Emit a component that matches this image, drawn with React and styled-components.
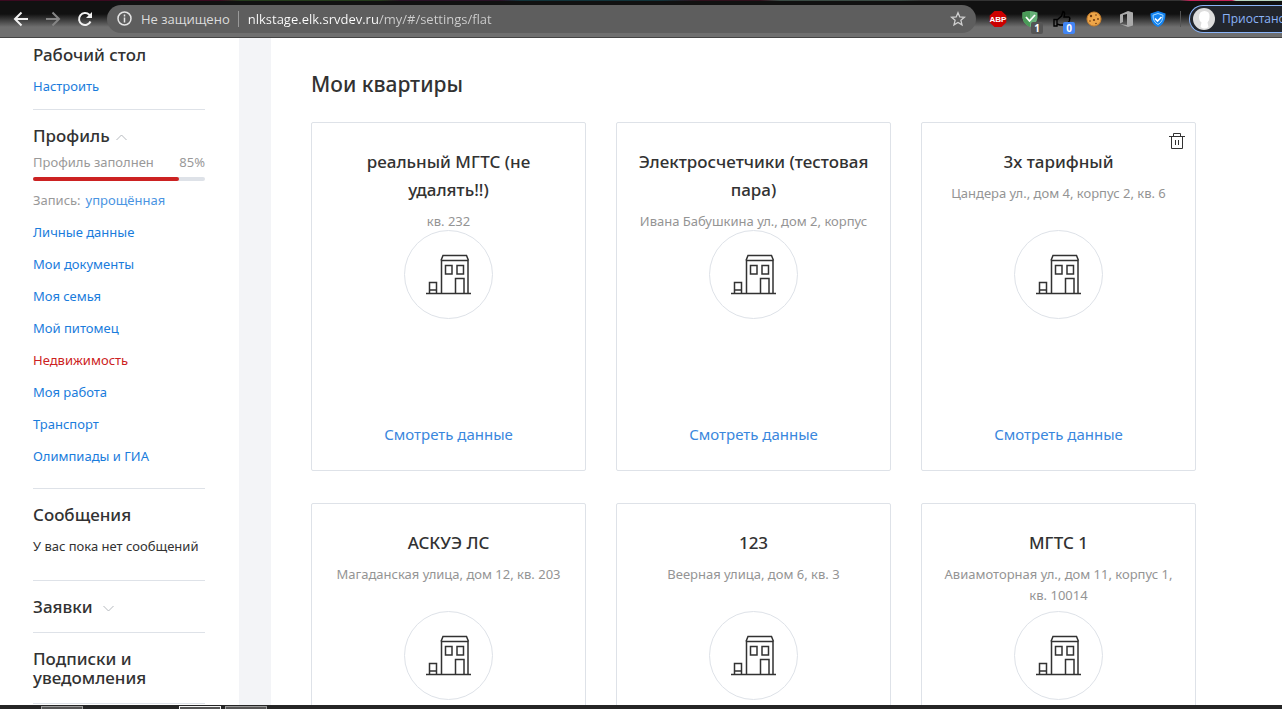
import React from "react";
import styled, { createGlobalStyle } from "styled-components";

const GlobalStyle = createGlobalStyle`
  * {
    box-sizing: border-box;
  }
  body {
    margin: 0;
    background: #fff;
    color: #323232;
    font-family: "Noto Sans", "Open Sans", sans-serif;
    font-size: 13px;
  }
  h1, h2, h3, p, ul {
    margin: 0;
    padding: 0;
  }
  button, input {
    margin: 0;
    padding: 0;
    border: 0;
    background: none;
    font: inherit;
    color: inherit;
  }
  svg {
    display: block;
    flex: none;
  }
`;

const profileLinks = [
  { name: "Личные данные", path: "#/settings/person" },
  { name: "Мои документы", path: "#/settings/docs" },
  { name: "Моя семья", path: "#/settings/family" },
  { name: "Мой питомец", path: "#/settings/pet" },
  { name: "Недвижимость", path: "#/settings/flat", active: true },
  { name: "Моя работа", path: "#/settings/work" },
  { name: "Транспорт", path: "#/settings/transport" },
  { name: "Олимпиады и ГИА", path: "#/settings/olymp" },
];

const flats = [
  { id: 1, title: "реальный МГТС (не удалять!!)", address: "кв. 232" },
  { id: 2, title: "Электросчетчики (тестовая пара)", address: "Ивана Бабушкина ул., дом 2, корпус" },
  { id: 3, title: "3х тарифный", address: "Цандера ул., дом 4, корпус 2, кв. 6", removable: true },
  { id: 4, title: "АСКУЭ ЛС", address: "Магаданская улица, дом 12, кв. 203" },
  { id: 5, title: "123", address: "Веерная улица, дом 6, кв. 3" },
  { id: 6, title: "МГТС 1", address: "Авиамоторная ул., дом 11, корпус 1, кв. 10014" },
];

const profileFilled = 85;

const Window = styled.div`
  display: flex;
  flex-direction: column;
  height: 100vh;
  overflow: hidden;
`;

//
// Панель браузера
//
const Toolbar = styled.header`
  display: flex;
  align-items: center;
  flex: none;
  height: 38px;
  border-bottom: 1px solid #444;
  background:
    linear-gradient(90deg, #3b0a20 0 220px, #243b1c 240px 380px, #2a1226 400px 500px, #12343a 520px 660px, #30101c 700px 760px, #3a4a44 780px 900px, #333 920px 1180px, #c22458 1190px 1232px, #b9d6c0 1236px) top / 100% 1px no-repeat,
    linear-gradient(#111 0, #111 14px, #6f6f6f 27px, #6f6f6f 100%);
  font-family: "Open Sans", "Noto Sans", sans-serif;
  overflow: hidden;
`;

const NavButtons = styled.div`
  display: flex;
  gap: 16px;
  padding: 0 14px 0 13px;
`;

const NavButton = styled.button`
  color: ${(props) => (props.disabled ? "#858585" : "#f1f1f1")};
`;

const AddressBar = styled.div`
  display: flex;
  align-items: center;
  flex: 1;
  height: 28px;
  padding: 0 10px;
  border-radius: 14px;
  background: #5e5e5e;
`;

const Security = styled.label`
  margin-left: 9px;
  padding-right: 8px;
  border-right: 1px solid #999;
  color: #dcdcdc;
  line-height: 16px;
  white-space: nowrap;
`;

const UrlInput = styled.input`
  flex: 1;
  min-width: 0;
  margin-left: 9px;
  background: linear-gradient(90deg, #fff 131px, #cfcfcf 131px);
  background-clip: text;
  color: transparent;
  outline: none;
`;

const Extensions = styled.div`
  display: flex;
  align-items: center;
  gap: 8px;
  padding: 0 10px;
`;

const ExtensionButton = styled.button`
  position: relative;
  padding: 2px;
`;

const Badge = styled.span`
  position: absolute;
  right: -1px;
  bottom: -4px;
  width: 12px;
  height: 12px;
  border-radius: 2px;
  background: ${(props) => props.$color};
  color: #fff;
  font-size: 10px;
  font-weight: 700;
  line-height: 12px;
  text-align: center;
`;

const Account = styled.button`
  display: flex;
  align-items: center;
  flex: none;
  gap: 7px;
  width: 93px;
  height: 28px;
  padding-left: 3px;
  overflow: hidden;
  border: 1px solid #8ab4f8;
  border-right: 0;
  border-radius: 14px 0 0 14px;
  background: #22262d;
  color: #8ab4f8;
  font-size: 12px;
  white-space: nowrap;
`;

const Separator = styled.span`
  width: 1px;
  height: 16px;
  margin-right: 8px;
  background: #555;
`;

//
// Страница
//
const Page = styled.div`
  display: flex;
  flex: 1;
  min-height: 0;
`;

const Sidebar = styled.aside`
  flex: none;
  width: 271px;
  padding: 0 34px 0 33px;
  border-right: 32px solid #f3f4f7;
  overflow: hidden;
`;

const Section = styled.section`
  padding: ${(props) => props.$top || 16}px 0 ${(props) => props.$bottom || 16}px;
  border-bottom: 1px solid #dee2e8;
`;

const SectionTitle = styled.h2`
  display: flex;
  align-items: center;
  gap: ${(props) => props.$gap || 0}px;
  font-size: 17px;
  font-weight: 500;
  line-height: 19px;
  svg {
    margin-top: 4px;
  }
`;

const SideText = styled.p`
  display: flex;
  gap: 5px;
  margin-top: ${(props) => props.$space || 12}px;
  color: ${(props) => (props.$muted ? "#999" : "#323232")};
  line-height: 20px;
  white-space: nowrap;
`;

const SideLink = styled.a`
  color: ${(props) => (props.$active ? "#cc2222" : props.$light ? "#4a94e2" : "#1a7cdc")};
  text-decoration: none;
`;

const ProgressLabel = styled.label`
  display: flex;
  justify-content: space-between;
  margin-top: 7px;
  color: #999;
  line-height: 20px;
`;

const Progress = styled.progress`
  display: block;
  appearance: none;
  width: 100%;
  height: 4px;
  margin-top: 5px;
  border: 0;
  &::-webkit-progress-bar {
    border-radius: 2px;
    background: #dee2e8;
  }
  &::-webkit-progress-value {
    border-radius: 2px;
    background: #cc2222;
  }
`;

const LinkList = styled.ul`
  display: flex;
  flex-direction: column;
  gap: 12px;
  margin-top: 12px;
  line-height: 20px;
  list-style: none;
`;

const Main = styled.main`
  flex: 1;
  padding: 32px 86px 0 40px;
  overflow: hidden;
`;

const PageTitle = styled.h1`
  font-size: 21px;
  font-weight: 500;
  line-height: 28px;
`;

const FlatGrid = styled.div`
  display: grid;
  grid-template-columns: repeat(3, 1fr);
  gap: 32px 30px;
  margin-top: 24px;
`;

const Card = styled.article`
  position: relative;
  display: flex;
  flex-direction: column;
  align-items: center;
  padding: 25px 18px 24px;
  border: 1px solid #dee2e8;
  border-radius: 2px;
  text-align: center;
`;

const CardText = styled.div`
  height: 82px;
  overflow: hidden;
`;

const CardTitle = styled.h3`
  font-size: 17px;
  font-weight: 500;
  line-height: 28px;
`;

const CardAddress = styled.p`
  margin-top: 7px;
  color: #949494;
  line-height: 21px;
`;

const IconCircle = styled.div`
  display: grid;
  place-items: center;
  width: 89px;
  height: 89px;
  border: 1px solid #dee2e8;
  border-radius: 50%;
`;

const CardLink = styled.a`
  margin-top: 103px;
  color: #3a87dd;
  font-size: 15px;
  line-height: 24px;
  text-decoration: none;
`;

const DeleteButton = styled.button`
  position: absolute;
  top: 9px;
  right: 10px;
`;

const Taskbar = styled.footer`
  display: flex;
  align-items: flex-end;
  gap: 4px;
  flex: none;
  height: 4px;
  padding-left: 41px;
  background: #252525;
`;

const TaskButton = styled.button`
  width: 42px;
  height: 3px;
  margin-right: ${(props) => props.$space || 0}px;
  border: 1px solid ${(props) => (props.$active ? "#f1f1f1" : "#999")};
  border-bottom: 0;
  background: #555;
`;

const Arrow = ({ back }) => (
  <svg width="16" height="16" viewBox="0 0 16 16" fill="none" stroke="currentColor" strokeWidth="2">
    <path d={back ? "M15 8H2M8.500 1.500 2 8l6.500 6.500" : "M1 8h13M7.500 1.500 14 8l-6.500 6.500"} />
  </svg>
);

const Reload = () => (
  <svg width="16" height="16" viewBox="0 0 16 16" fill="none" stroke="currentColor" strokeWidth="2">
    <path d="M13.500 10.500A6 6 0 1 1 12.300 3.800L14 5.500" />
    <path d="M15 1v6H9z" fill="currentColor" stroke="none" />
  </svg>
);

const Info = () => (
  <svg width="15" height="15" viewBox="0 0 15 15" fill="none" stroke="#e4e4e4" strokeWidth="1.500">
    <circle cx="7.500" cy="7.500" r="6.500" />
    <path d="M7.500 6.500v5M7.500 3.500v2" />
  </svg>
);

const Star = () => (
  <svg width="16" height="16" viewBox="0 0 16 16" fill="none" stroke="#d0d0d0" strokeWidth="1.300">
    <path d="m8 1.700 1.800 4.200 4.600.400-3.500 3 1.100 4.500L8 11.400l-4 2.400 1.100-4.500-3.500-3 4.600-.400z" />
  </svg>
);

const AbpIcon = () => (
  <svg width="20" height="18" viewBox="0 0 20 18">
    <path d="M6.500 1h7L18.300 5.500v7L13.500 17h-7L1.700 12.500v-7z" fill="#cc0000" />
    <text x="10" y="12" fill="#fff" fontSize="8" fontWeight="700" textAnchor="middle" fontFamily="Liberation Sans, sans-serif">ABP</text>
  </svg>
);

const AdguardIcon = () => (
  <svg width="20" height="18" viewBox="0 0 20 18">
    <path d="M2.500 2.500Q10-.500 17.500 2.500V8q-1 6-7.500 9Q3.500 14 2.500 8z" fill="#67b279" />
    <path d="M10 1v16Q3.500 14 2.500 8V2.500Q6 1 10 1z" fill="#4a9b58" />
    <path d="m6 7 3.500 4L15 5" fill="none" stroke="#fff" strokeWidth="1.800" />
  </svg>
);

const ThumbIcon = () => (
  <svg width="20" height="18" viewBox="0 0 20 18" fill="none" stroke="#000" strokeWidth="1.400">
    <path d="M2 9.500h3V16H2zM5 10l4.500-4L11 1.500q2 .5 1.500 3L12 7h5q1.500 1 .5 2.500.5 1.500-1 2.500 0 2-2 3H8l-3-1" />
  </svg>
);

const CookieIcon = () => (
  <svg width="20" height="18" viewBox="0 0 20 18">
    <circle cx="10" cy="9" r="7" fill="#eda548" stroke="#c9802c" />
    <g fill="#6d3a12">
      <circle cx="7" cy="6" r="1.200" />
      <circle cx="12" cy="5" r=".8" />
      <circle cx="10" cy="10" r="1.100" />
      <circle cx="14" cy="9" r=".9" />
      <circle cx="6" cy="11" r=".8" />
      <circle cx="12" cy="13.500" r=".8" />
    </g>
  </svg>
);

const OfficeIcon = () => (
  <svg width="20" height="18" viewBox="0 0 20 18">
    <path fillRule="evenodd" d="M4 4.500 12 1l5 1.500v13L12 17l-8-3 7 1V4L7 5v7l-3 1.500z" fill="#aaa" />
  </svg>
);

const ShieldIcon = () => (
  <svg width="20" height="18" viewBox="0 0 20 18" fill="none">
    <path d="m10 1 7.500 2.500c0 6-1.500 11-7.500 13.500C4 14.500 2.500 9.500 2.500 3.500z" fill="#1282f0" />
    <path d="m10 3.500 5 1.700c0 4.300-1.500 7.500-5 9.300-3.500-1.800-5-5-5-9.300z" stroke="#a9dcff" />
    <path d="m7 8.500 2.500 2.500L13.500 7" stroke="#fff" strokeWidth="1.700" />
  </svg>
);

const Avatar = () => (
  <svg width="22" height="22" viewBox="0 0 22 22">
    <circle cx="11" cy="11" r="11" fill="#ddd" />
    <path d="M6 9q0-6 5.500-6T16.500 9q0 4-2 5.500l1 4.500q-4 3-8 0l1-4.500Q6 13 6 9z" fill="#fff" />
  </svg>
);

const Chevron = ({ up }) => (
  <svg width="11" height="7" viewBox="0 0 11 7" fill="none" stroke="#b5b9be">
    <path d={up ? "M.500 6 5.500 1l5 5" : "m.500 1 5 5 5-5"} />
  </svg>
);

const HouseIcon = () => (
  <svg width="45" height="41" viewBox="0 0 45 41" fill="none" stroke="#323232" strokeWidth="1.500">
    <path d="M0 39.500h45M15.500 39V6.500H42V39M15 6.500l2-5h23.500l2 5" />
    <path d="M19.500 11.500H26V20h-6.500zM31 11.500h6.500V20H31zM29.500 39V24.500H38V39" />
    <path d="M3.500 39V28.500h7V39M3.500 36h7" />
  </svg>
);

const TrashIcon = () => (
  <svg width="16" height="18" viewBox="0 0 16 18" fill="none" stroke="#323232">
    <path d="M0 4.500h16M4.500 4V1.500h7V4M2.500 4.500v12h11v-12M6.500 8v5M9.500 8v5" />
  </svg>
);

const extensions = [
  { name: "Adblock Plus", icon: <AbpIcon /> },
  { name: "Adguard", icon: <AdguardIcon />, badge: "1", color: "#555" },
  { name: "Likes", icon: <ThumbIcon />, badge: "0", color: "#4285f4" },
  { name: "Cookies", icon: <CookieIcon /> },
  { name: "Office", icon: <OfficeIcon /> },
  { name: "Protect", icon: <ShieldIcon /> },
];

const BrowserToolbar = () => (
  <Toolbar>
    <NavButtons>
      <NavButton aria-label="Назад"><Arrow back /></NavButton>
      <NavButton aria-label="Вперёд" disabled><Arrow /></NavButton>
      <NavButton aria-label="Обновить"><Reload /></NavButton>
    </NavButtons>
    <AddressBar>
      <Info />
      <Security htmlFor="url">Не защищено</Security>
      <UrlInput id="url" type="text" defaultValue="nlkstage.elk.srvdev.ru/my/#/settings/flat" />
      <button aria-label="В закладки"><Star /></button>
    </AddressBar>
    <Extensions>
      {extensions.map((item) => (
        <ExtensionButton key={item.name} aria-label={item.name}>
          {item.icon}
          {item.badge && <Badge $color={item.color}>{item.badge}</Badge>}
        </ExtensionButton>
      ))}
    </Extensions>
    <Separator />
    <Account>
      <Avatar />
      Приостано
    </Account>
  </Toolbar>
);

const Menu = () => (
  <Sidebar>
    <Section $top={7} $bottom={13}>
      <SectionTitle>Рабочий стол</SectionTitle>
      <SideText><SideLink href="#/desktop">Настроить</SideLink></SideText>
    </Section>
    <Section $bottom={22}>
      <SectionTitle $gap={6}>Профиль <Chevron up /></SectionTitle>
      <ProgressLabel htmlFor="filled">
        <span>Профиль заполнен</span>
        <span>{profileFilled}%</span>
      </ProgressLabel>
      <Progress id="filled" max="100" value={profileFilled} />
      <SideText $muted $space={9}>
        Запись: <SideLink $light href="#/settings/account">упрощённая</SideLink>
      </SideText>
      <LinkList>
        {profileLinks.map((item) => (
          <li key={item.path}>
            <SideLink href={item.path} $active={item.active}>{item.name}</SideLink>
          </li>
        ))}
      </LinkList>
    </Section>
    <Section $bottom={24}>
      <SectionTitle>Сообщения</SectionTitle>
      <SideText>У вас пока нет сообщений</SideText>
    </Section>
    <Section>
      <SectionTitle $gap={10}>Заявки <Chevron /></SectionTitle>
    </Section>
    <Section>
      <SectionTitle>Подписки и уведомления</SectionTitle>
    </Section>
  </Sidebar>
);

const FlatCard = ({ flat }) => (
  <Card>
    {flat.removable && (
      <DeleteButton aria-label="Удалить"><TrashIcon /></DeleteButton>
    )}
    <CardText>
      <CardTitle>{flat.title}</CardTitle>
      <CardAddress>{flat.address}</CardAddress>
    </CardText>
    <IconCircle><HouseIcon /></IconCircle>
    <CardLink href={`#/settings/flat/${flat.id}`}>Смотреть данные</CardLink>
  </Card>
);

function App() {
  return (
    <Window>
      <GlobalStyle />
      <BrowserToolbar />
      <Page>
        <Menu />
        <Main>
          <PageTitle>Мои квартиры</PageTitle>
          <FlatGrid>
            {flats.map((flat) => (
              <FlatCard key={flat.id} flat={flat} />
            ))}
          </FlatGrid>
        </Main>
      </Page>
      <Taskbar>
        <TaskButton aria-label="Приложение" $space={92} />
        <TaskButton aria-label="Браузер" $active />
        <TaskButton aria-label="Проводник" />
      </Taskbar>
    </Window>
  );
}

export default App;
